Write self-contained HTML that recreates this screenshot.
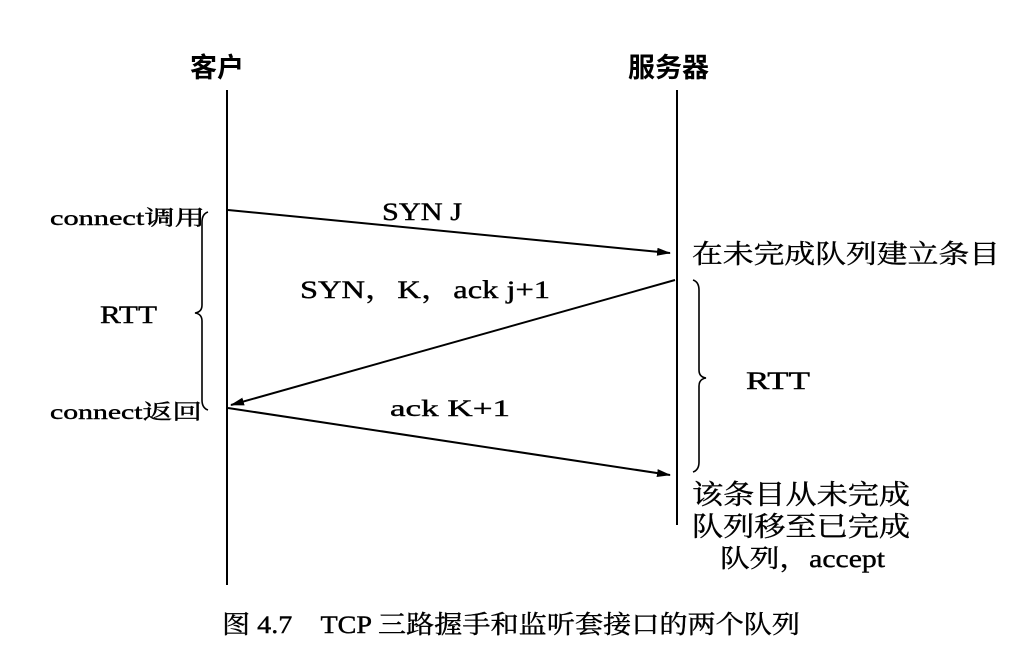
<!DOCTYPE html>
<html><head><meta charset="utf-8"><style>
html,body{margin:0;padding:0;background:#fff;}
svg{display:block}
text{font-family:"Liberation Serif","Noto Serif CJK SC","Noto Sans CJK SC",serif;fill:#000;stroke:#000;stroke-width:0.4}
.b{font-family:"Noto Sans CJK SC","WenQuanYi Zen Hei",sans-serif;font-weight:bold;stroke-width:0}
</style></head><body>
<svg width="1018" height="645" viewBox="0 0 1018 645" xmlns="http://www.w3.org/2000/svg">
<defs><marker id="a" markerWidth="14" markerHeight="8" refX="13" refY="4" orient="auto" markerUnits="userSpaceOnUse"><path d="M0,0 L14,4 L0,8 Z" fill="#000"/></marker></defs>
<text x="190" y="77" class="b" font-size="27">客户</text>
<text x="628" y="77" class="b" font-size="27">服务器</text>
<line x1="227" y1="90" x2="227" y2="585" stroke="#000" stroke-width="2"/>
<line x1="677" y1="90" x2="677" y2="525" stroke="#000" stroke-width="2"/>
<line x1="228" y1="210" x2="670" y2="253" stroke="#000" stroke-width="2" marker-end="url(#a)"/>
<line x1="675" y1="280" x2="231" y2="405" stroke="#000" stroke-width="2" marker-end="url(#a)"/>
<line x1="228" y1="408" x2="670" y2="475" stroke="#000" stroke-width="2" marker-end="url(#a)"/>
<path d="M208,212 Q202,214 202,222 L202,305 Q202,312 195,313 Q202,314 202,321 L202,400 Q202,408 208,410" fill="none" stroke="#000" stroke-width="1.6"/>
<path d="M693,280 Q699,282 699,290 L699,370 Q699,377 706,378 Q699,379 699,386 L699,462 Q699,470 693,472" fill="none" stroke="#000" stroke-width="1.6"/>
<text x="50" y="225" font-size="21" textLength="155" lengthAdjust="spacingAndGlyphs">connect调用</text>
<text x="100" y="323" font-size="25" textLength="57" lengthAdjust="spacingAndGlyphs">RTT</text>
<text x="50" y="419" font-size="21" textLength="152" lengthAdjust="spacingAndGlyphs">connect返回</text>
<text x="382" y="220" font-size="25" textLength="80" lengthAdjust="spacingAndGlyphs">SYN J</text>
<text x="300" y="298" font-size="25" textLength="250" lengthAdjust="spacingAndGlyphs">SYN，K，ack j+1</text>
<text x="390" y="416" font-size="23" textLength="120" lengthAdjust="spacingAndGlyphs">ack K+1</text>
<text x="692" y="263" font-size="26" textLength="308" lengthAdjust="spacingAndGlyphs">在未完成队列建立条目</text>
<text x="746" y="389" font-size="25" textLength="64" lengthAdjust="spacingAndGlyphs">RTT</text>
<text x="692" y="504" font-size="27" textLength="218" lengthAdjust="spacingAndGlyphs">该条目从未完成</text>
<text x="692" y="536" font-size="27" textLength="218" lengthAdjust="spacingAndGlyphs">队列移至已完成</text>
<text x="720" y="567" font-size="25" textLength="165" lengthAdjust="spacingAndGlyphs">队列，accept</text>
<text x="222" y="633" font-size="25" textLength="578" lengthAdjust="spacingAndGlyphs">图 4.7　TCP 三路握手和监听套接口的两个队列</text>
</svg>
</body></html>
